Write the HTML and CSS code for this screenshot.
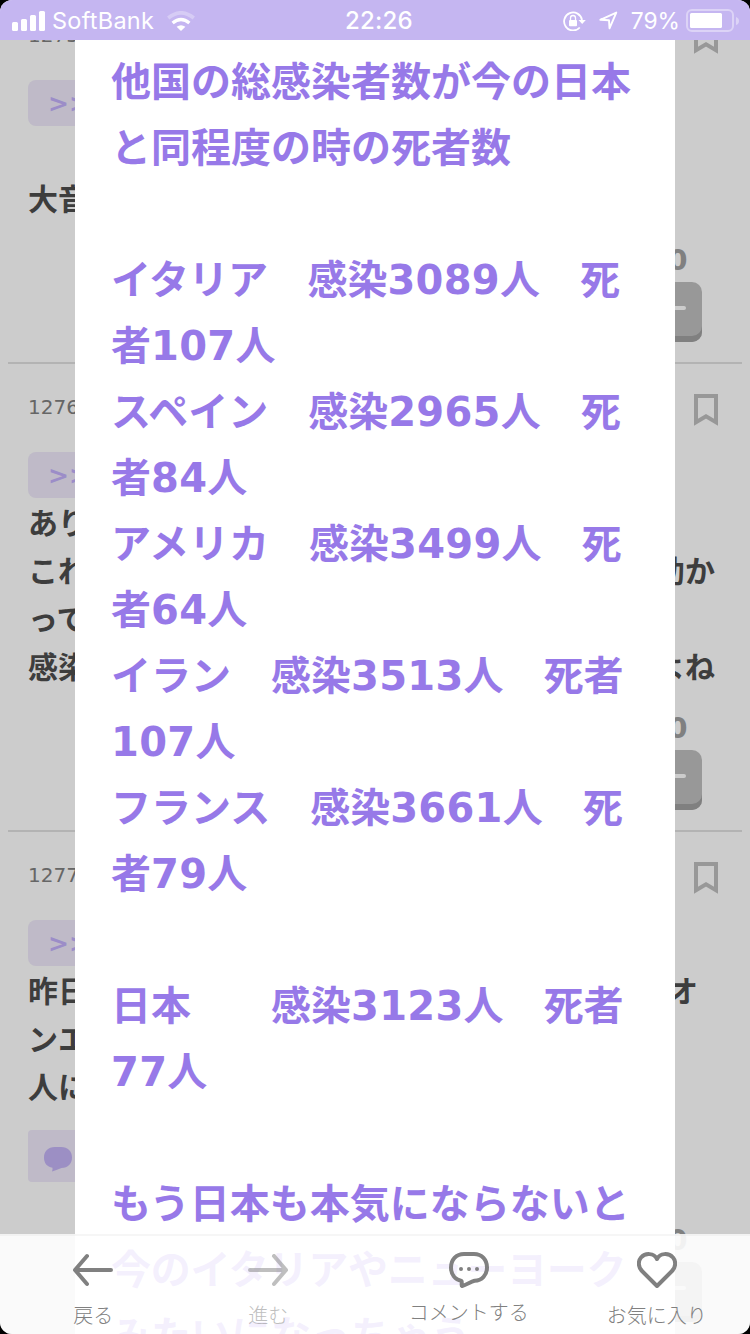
FILE: index.html
```html
<!DOCTYPE html>
<html lang="ja">
<head>
    <meta charset="UTF-8">
    <meta name="viewport" content="width=device-width, initial-scale=1.0">
    <title>コメント</title>
    <link rel="stylesheet" href="styles.css">
</head>
<body>
    <svg class="sprite">
        <symbol id="bookmark" viewBox="0 0 24 32">
            <path d="M2 2H22V28.2L12 22.3L2 28.2Z" fill="none" stroke="currentColor" stroke-width="4"/>
        </symbol>
    </svg>
    <div class="app">
        <header class="status-bar">
            <div class="status-left">
                <svg width="34" height="20" viewBox="0 0 34 20" fill="#fff">
                    <rect x="0" y="11" width="6" height="9" rx="1.5"/>
                    <rect x="9" y="8" width="6" height="12" rx="1.5"/>
                    <rect x="18" y="4" width="6" height="16" rx="1.5"/>
                    <rect x="27" y="0" width="6" height="20" rx="1.5"/>
                </svg>
                <span class="carrier">SoftBank</span>
                <svg width="28" height="20" viewBox="0 0 28 20">
                    <path d="M1.2 7Q14-3.400 26.800 7" fill="none" stroke="#fff" stroke-opacity=".3" stroke-width="3.600"/>
                    <path d="M5.600 12Q14 5.200 22.400 12" fill="none" stroke="#fff" stroke-width="3.400"/>
                    <path d="M14 20L9.600 15.800Q14 12.500 18.400 15.800Z" fill="#fff"/>
                </svg>
            </div>
            <span class="clock">22:26</span>
            <div class="status-right">
                <svg width="23" height="20" viewBox="0 0 23 20">
                    <path d="M16.800 16.500A9 9 0 1 1 19 9" fill="none" stroke="#fff" stroke-width="1.800"/>
                    <path d="M15.500 9H22.800L19.200 13Z" fill="#fff"/>
                    <rect x="6" y="9" width="8" height="6.200" rx="1" fill="#fff"/>
                    <path d="M7.500 9V7a2.500 2.500 0 0 1 5 0V9" fill="none" stroke="#fff" stroke-width="1.300"/>
                </svg>
                <svg class="location" width="19" height="19" viewBox="0 0 19 19">
                    <path d="M1.300 8.800L17.300 1.600L10.500 17.300L10 9.300Z" fill="none" stroke="#fff" stroke-width="1.900" stroke-linejoin="round"/>
                </svg>
                <span class="percent">79%</span>
                <svg width="53" height="24" viewBox="0 0 53 24">
                    <rect x="1" y="1" width="46" height="21" rx="5" fill="none" stroke="#fff" stroke-opacity=".4" stroke-width="2"/>
                    <rect x="4" y="4" width="32" height="15" rx="1.500" fill="#fff"/>
                    <path d="M50 8Q53 9 53 12Q53 15 50 16Z" fill="#fff" fill-opacity=".4"/>
                </svg>
            </div>
        </header>

        <main class="posts">
            <article class="post">
                <div class="post-head"><span>1275</span><svg class="bookmark"><use href="#bookmark"/></svg></div>
                <div class="anchor">&gt;&gt;1</div>
                <div class="post-text"><br>大音</div>
                <div class="vote"><span class="count">-0</span><button class="minus"></button></div>
            </article>
            <article class="post">
                <div class="post-head"><span>1276</span><svg class="bookmark"><use href="#bookmark"/></svg></div>
                <div class="anchor">&gt;&gt;1</div>
                <div class="post-text">
                    <p><span>あり</span></p>
                    <p><span>これ</span><span>助か</span></p>
                    <p><span>って</span></p>
                    <p><span>感染</span><span>よね</span></p>
                </div>
                <div class="vote"><span class="count">-0</span><button class="minus"></button></div>
            </article>
            <article class="post">
                <div class="post-head"><span>1277</span><svg class="bookmark"><use href="#bookmark"/></svg></div>
                <div class="anchor">&gt;&gt;1</div>
                <div class="post-text">
                    <p class="short"><span>昨日</span><span>オ</span></p>
                    <p><span>ンエ</span></p>
                    <p><span>人に</span></p>
                </div>
                <div class="replies">
                    <svg width="28" height="25" viewBox="0 0 28 25">
                        <path d="M11 0H17C24 0 28 4.500 28 10.500S24 21 17.500 21Q12 23 8 24.500Q8.800 22.500 8.500 20.700C3 20 0 16 0 10.500C0 4.500 4 0 11 0Z" fill="#c3b3f5"/>
                    </svg>
                </div>
                <div class="vote"><span class="count">-0</span><button class="minus"></button></div>
            </article>
        </main>

        <div class="overlay">
            <div class="modal">
                <p>他国の総感染者数が今の日本</p>
                <p>と同程度の時の死者数</p>
                <br>
                <p><span class="tight">イタリア</span>　感染<b>3089</b>人　死</p>
                <p>者<b>107</b>人</p>
                <p>スペイン　感染<b>2965</b>人　死</p>
                <p>者<b>84</b>人</p>
                <p>アメリカ　感染<b>3499</b>人　死</p>
                <p>者<b>64</b>人</p>
                <p>イラン　感染<b>3513</b>人　死者</p>
                <p><b>107</b>人</p>
                <p>フランス　感染<b>3661</b>人　死</p>
                <p>者<b>79</b>人</p>
                <br>
                <p>日本　　感染<b>3123</b>人　死者</p>
                <p><b>77</b>人</p>
                <br>
                <p>もう日本も本気にならないと</p>
                <p class="kana">今のイタリアやニューヨーク</p>
                <p>みたいになっちゃう</p>
            </div>
        </div>

        <nav class="toolbar">
            <a class="tool">
                <svg width="40" height="34" viewBox="0 0 40 34"><path d="M38 17H2M14 3L2 17L14 31"/></svg>
                <span>戻る</span>
            </a>
            <a class="tool forward">
                <svg width="40" height="34" viewBox="0 0 40 34"><path d="M2 17H38M26 3L38 17L26 31"/></svg>
                <span>進む</span>
            </a>
            <a class="tool comment">
                <svg width="40" height="36" viewBox="0 0 40 36">
                    <path d="M15 2H25C33 2 38 8 38 15.500C38 23 33 28.500 25.500 28.800C21.500 29.800 18 32.500 13 34C12 33.500 13.300 31 12.500 29C6 27.500 2 22.500 2 15.500C2 8 7 2 15 2Z"/>
                    <g class="dots"><circle cx="12" cy="17" r="2"/><circle cx="20" cy="17" r="2"/><circle cx="28" cy="17" r="2"/></g>
                </svg>
                <span>コメントする</span>
            </a>
            <a class="tool heart">
                <svg width="40" height="36" viewBox="0 0 40 36"><path d="M20 34L5 19C1 15 1 9 4 5.500C8.500 0.500 17 1 20 7C23 1 31.500 0.500 36 5.500C39 9 39 15 35 19Z"/></svg>
                <span>お気に入り</span>
            </a>
        </nav>
    </div>
</body>
</html>
```
FILE: styles.css
```css
* {
    margin: 0;
    padding: 0;
    box-sizing: border-box;
}

body {
    background: #000;
    font-family: "DejaVu Sans", "Noto Sans CJK JP", sans-serif;
}

.sprite {
    display: none;
}

.app {
    position: relative;
    width: 750px;
    height: 1334px;
    overflow: hidden;
    border-radius: 12px;
    background: #fff;
}

/* status bar */
.status-bar {
    position: relative;
    z-index: 3;
    height: 40px;
    padding: 0 11px 0 12px;
    display: grid;
    grid-template-columns: 1fr auto 1fr;
    align-items: center;
    background: #c5b6f1;
    color: #fff;
    font-family: Inter, sans-serif;
    font-size: 24px;
    line-height: 40px;
}

.status-left,
.status-right {
    display: flex;
    align-items: center;
}

.status-right {
    justify-content: flex-end;
}

.carrier {
    margin: 0 13px 0 6px;
    padding-top: 1px;
    font-size: 23.5px;
    letter-spacing: 0.25px;
}

.clock {
    margin-left: 7px;
    padding-top: 1px;
    font-weight: 500;
    letter-spacing: 0.2px;
}

.location {
    margin: 0 13px 0 13px;
}

.percent {
    margin-right: 6px;
    padding-top: 1px;
    font-size: 22.8px;
}

/* posts */
.posts {
    margin-top: -48px;
    padding: 0 8px;
}

.post {
    padding: 30px 20px 20px;
    border-bottom: 2px solid #e0e0e0;
}

.post-head {
    display: flex;
    justify-content: space-between;
    align-items: flex-start;
    height: 58px;
    padding-right: 4px;
    font-size: 20px;
    line-height: 26px;
    color: #808080;
}

.bookmark {
    width: 24px;
    height: 32px;
    color: #bfbfbf;
}

.anchor {
    width: 120px;
    height: 46px;
    padding: 1px 0 0 20px;
    border-radius: 8px;
    background: #efe9fa;
    color: #c3b1fa;
    font-size: 25px;
    font-weight: bold;
    line-height: 46px;
}

.post-text {
    margin-top: -1px;
    padding-bottom: 2px;
    font-family: "Noto Sans CJK JP", sans-serif;
    font-size: 30px;
    font-weight: bold;
    line-height: 48px;
    color: #4d4d4d;
}

.post-text p {
    display: flex;
    justify-content: space-between;
    padding-right: 7px;
}

.post-text p.short {
    padding-right: 24px;
}

.replies {
    width: 200px;
    height: 52px;
    margin: 19px 0 0;
    padding: 17px 16px;
    border-radius: 4px;
    background: #efe9fa;
}

.vote {
    width: 60px;
    margin: 21px 20px 0 auto;
    display: flex;
    flex-direction: column;
    align-items: center;
}

.replies + .vote {
    margin-top: 42px;
}

.count {
    height: 38px;
    padding-top: 1px;
    font-size: 28px;
    font-weight: bold;
    line-height: 32px;
    color: #a0a0a0;
}

.minus {
    display: flex;
    justify-content: center;
    align-items: center;
    width: 60px;
    height: 60px;
    padding-bottom: 2px;
    border: none;
    border-radius: 10px;
    background: #bfbfbf;
    box-shadow: inset 0 -6px #a0a0a0;
}

.minus::before {
    content: "";
    width: 28px;
    height: 4px;
    margin-bottom: 6px;
    border-radius: 2px;
    background: #fff;
}

/* popup with the quoted comment */
.overlay {
    position: absolute;
    inset: 40px 0 0;
    z-index: 1;
    background: rgba(0, 0, 0, 0.2);
}

.modal {
    width: 600px;
    height: 100%;
    margin: 0 auto;
    padding: 6px 0 0 36px;
    overflow: hidden;
    background: #fff;
    color: #9779e8;
    font-family: "Noto Sans CJK JP", sans-serif;
    font-size: 40px;
    font-weight: bold;
    line-height: 66px;
    white-space: nowrap;
}

.modal p {
    height: 66px;
}

.modal b {
    font-family: "DejaVu Sans", sans-serif;
    letter-spacing: 0.3px;
}

.kana {
    letter-spacing: -0.25px;
}

.tight {
    letter-spacing: -0.5px;
}

/* bottom toolbar */
.toolbar {
    position: absolute;
    left: 0;
    right: 0;
    bottom: 0;
    z-index: 2;
    height: 100px;
    padding-top: 16px;
    display: grid;
    grid-template-columns: repeat(4, 1fr);
    border-top: 2px solid rgba(225, 225, 225, 0.3);
    background: rgba(255, 255, 255, 0.89);
}

.tool {
    display: flex;
    flex-direction: column;
    align-items: center;
    padding-right: 1px;
    color: #808080;
    font-family: "Noto Sans CJK JP", sans-serif;
    font-size: 20px;
    font-weight: 300;
    line-height: 28px;
}

.tool svg {
    height: 36px;
    margin-bottom: 13px;
    fill: none;
    stroke: #808080;
    stroke-width: 4;
    stroke-linecap: round;
    stroke-linejoin: round;
}

.tool .dots {
    fill: #808080;
    stroke: none;
}

.forward {
    padding-right: 26px;
    opacity: 0.5;
}

.comment {
    padding-right: 0;
}

.comment svg {
    margin-bottom: 10px;
}

.heart {
    padding: 0 0 0 1px;
}
```
